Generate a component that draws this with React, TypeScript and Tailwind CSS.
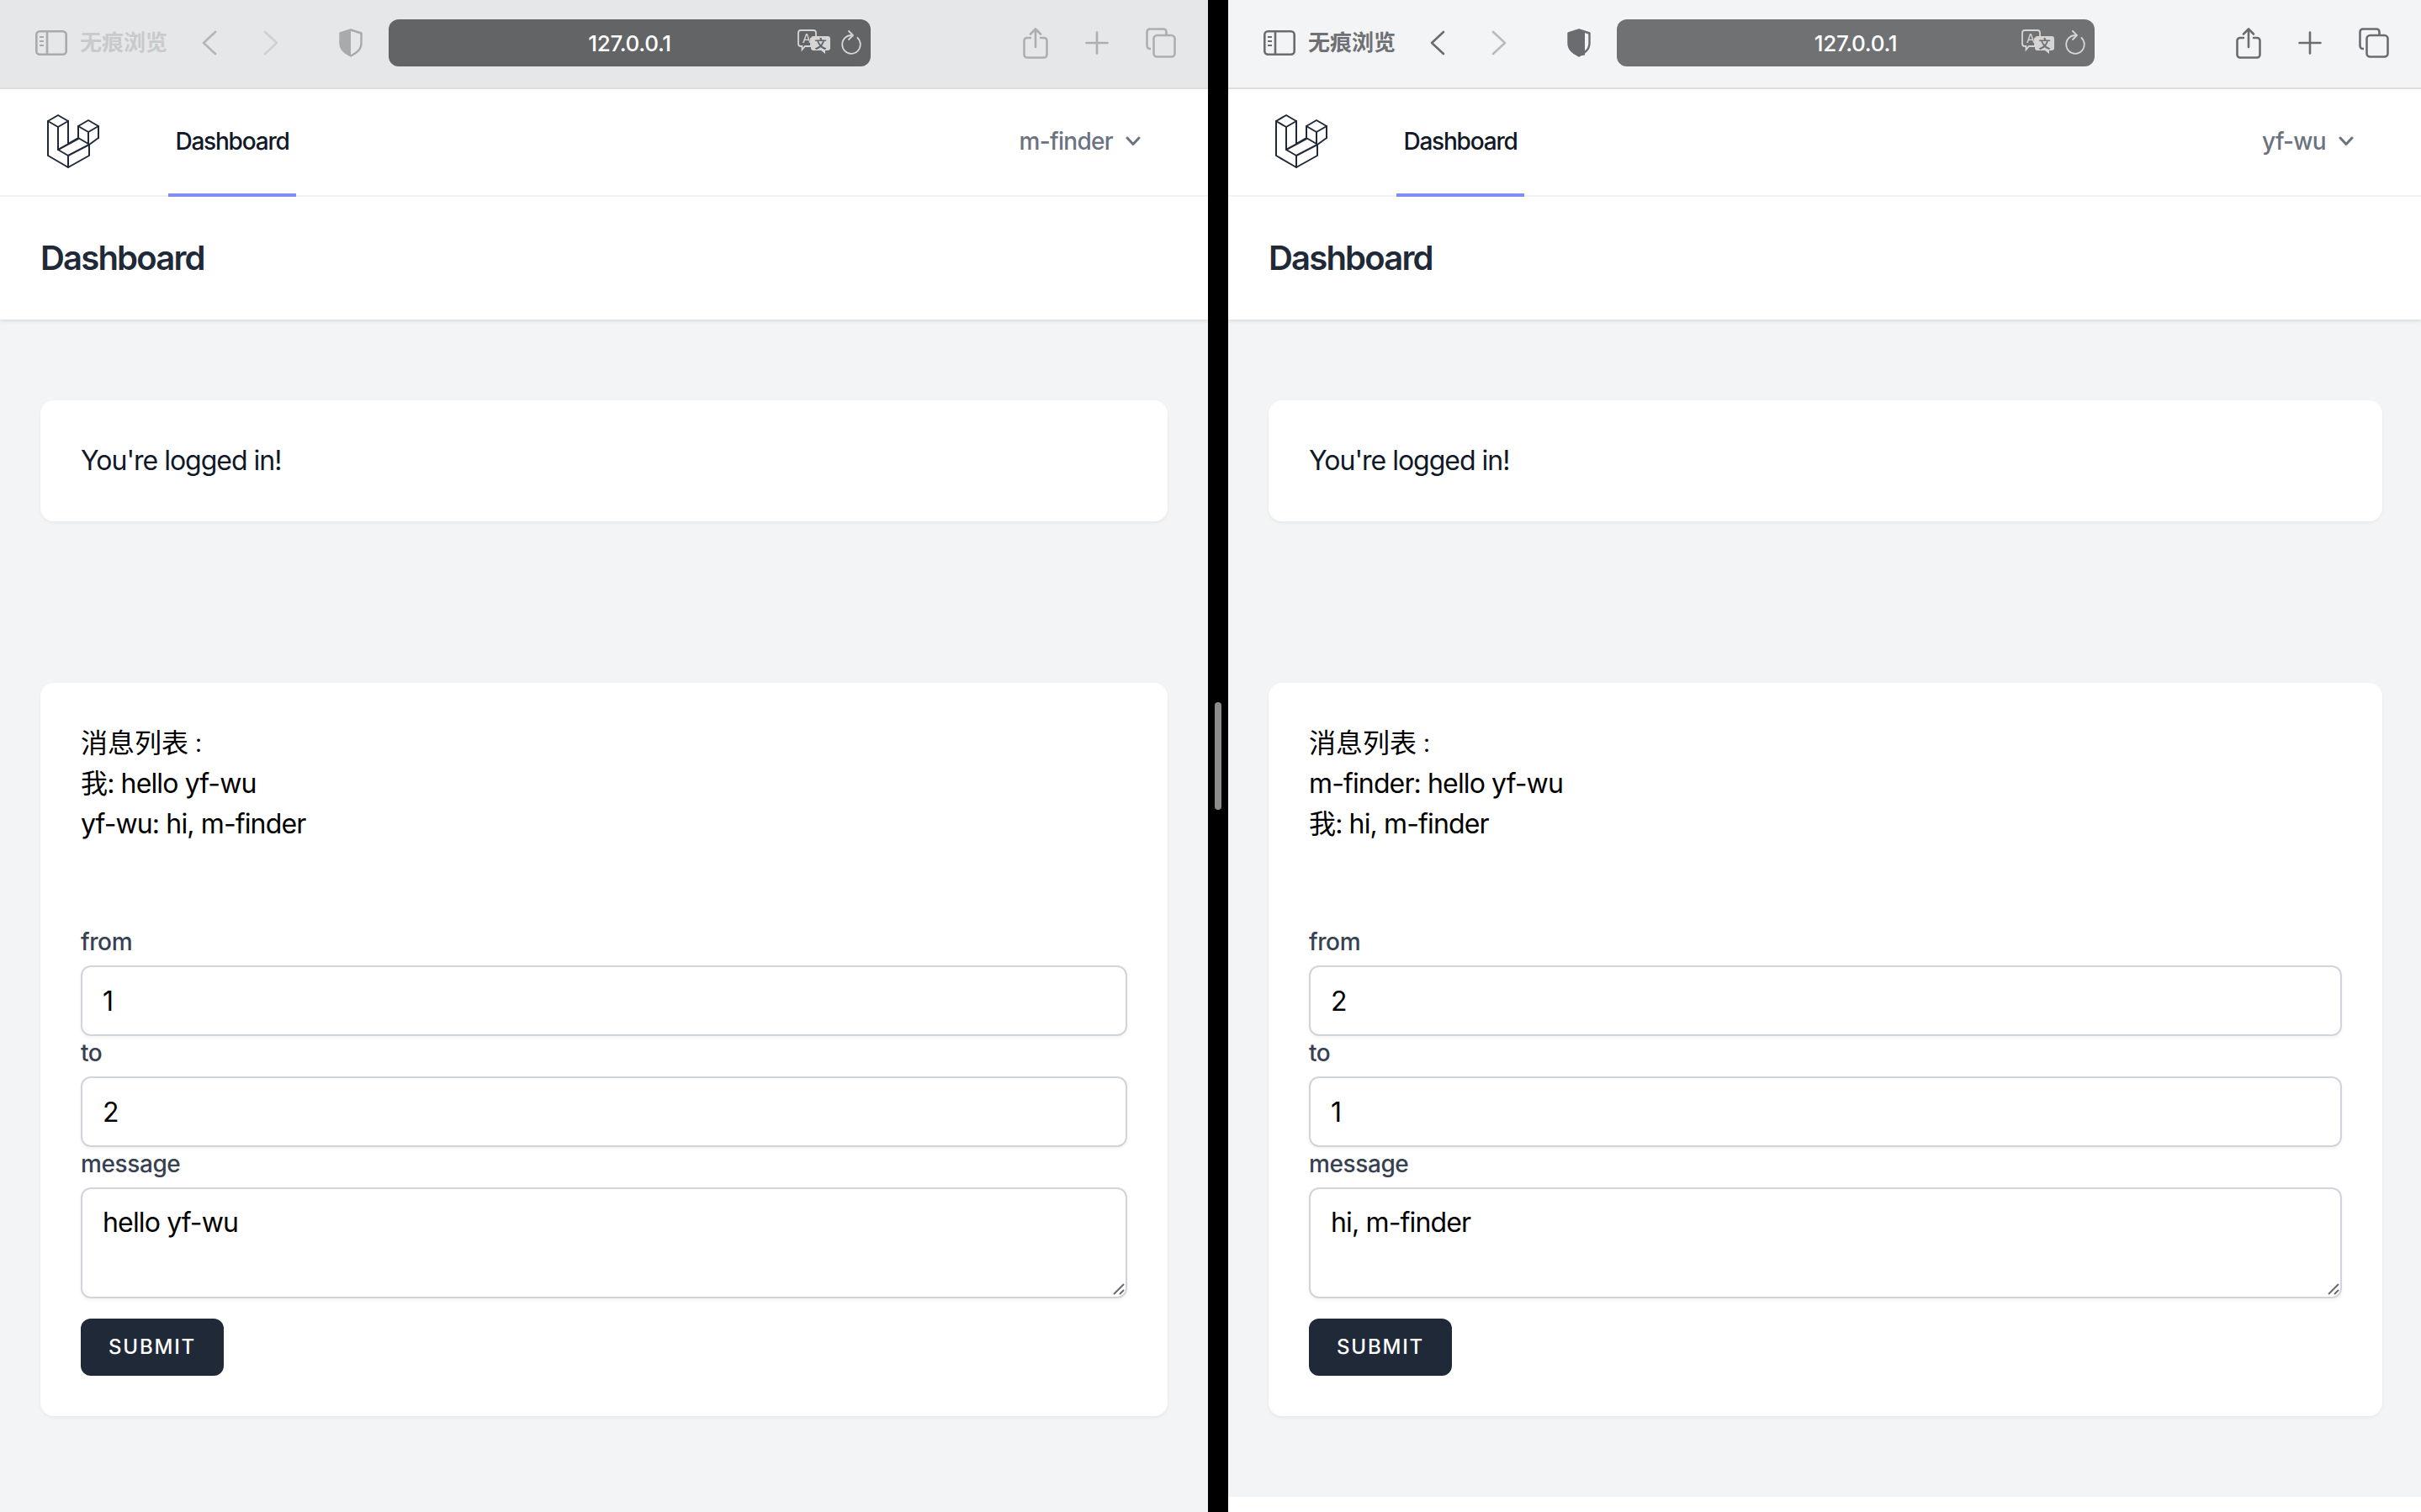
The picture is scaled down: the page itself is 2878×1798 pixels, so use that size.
const fontInter = 'font-[Inter,"Noto_Sans_CJK_SC",sans-serif]'

function SidebarIcon() {
  return (
    <svg width="38" height="30" viewBox="0 0 38 30" fill="none" stroke="currentColor" strokeWidth="2.6">
      <rect x="1.3" y="1.3" width="35.4" height="27.4" rx="4" />
      <path d="M14 1.5V28.5" />
      <path d="M5 8H10M5 13H10M5 18H10" strokeWidth="2" />
    </svg>
  )
}

function ChevronLeft() {
  return (
    <svg width="18" height="30" viewBox="0 0 18 30" fill="none" stroke="currentColor" strokeWidth="2.6" strokeLinecap="round" strokeLinejoin="round">
      <path d="M16 2L2 15L16 28" />
    </svg>
  )
}

function ChevronRight() {
  return (
    <svg width="18" height="30" viewBox="0 0 18 30" fill="none" stroke="currentColor" strokeWidth="2.6" strokeLinecap="round" strokeLinejoin="round">
      <path d="M2 2L16 15L2 28" />
    </svg>
  )
}

function ShieldIcon({ fillTo }: { fillTo: number }) {
  return (
    <svg width="28" height="34" viewBox="0 0 28 34" fill="none">
      <path d={`M14 1.5L${fillTo} 3.2V31.4L14 32.5C7 29 1.5 25 1.5 17V5.5Z`} fill="currentColor" />
      <path d="M14 1.5L26.5 5.5V17C26.5 25 21 29 14 32.5C7 29 1.5 25 1.5 17V5.5Z" stroke="currentColor" strokeWidth="2.4" strokeLinejoin="round" />
    </svg>
  )
}

function TranslateIcon({ inner }: { inner: string }) {
  return (
    <svg width="40" height="30" viewBox="0 0 40 30" fill="none">
      <path d="M4 1H19C21 1 22 2 22 4V11H16V20H9L5.5 24V20H4C2 20 1 19 1 17V4C1 2 2 1 4 1Z" stroke="#d4d5d7" strokeWidth="1.8" />
      <text x="11" y="16" textAnchor="middle" fontSize="15" fill="#d4d5d7" fontFamily="Inter, sans-serif">A</text>
      <path d="M19 8H36C38 8 39 9 39 11V22C39 24 38 25 36 25H33V29L28 25H19C17 25 16 24 16 22V11C16 9 17 8 19 8Z" fill="#d4d5d7" />
      <text x="27.5" y="22" textAnchor="middle" fontSize="14" fontWeight="700" fill={inner} fontFamily="'Noto Sans CJK SC', sans-serif">文</text>
    </svg>
  )
}

function ReloadIcon() {
  return (
    <svg width="24" height="29" viewBox="0 0 24 29" fill="none" stroke="#d4d5d7" strokeWidth="1.8" strokeLinecap="round" strokeLinejoin="round">
      <path d="M12 6C6 6 1.2 10.8 1.2 16.8C1.2 23 6 27.8 12 27.8C18 27.8 22.8 23 22.8 16.8C22.8 13.6 21.5 11 19.4 8.8" />
      <path d="M9 1L14 6L9 11" />
    </svg>
  )
}

function ShareIcon() {
  return (
    <svg width="30" height="37" viewBox="0 0 30 37" fill="none" stroke="currentColor" strokeWidth="2.6" strokeLinecap="round" strokeLinejoin="round">
      <path d="M9 12H5C3 12 1.5 13.5 1.5 15.5V32C1.5 34 3 35.5 5 35.5H25C27 35.5 28.5 34 28.5 32V15.5C28.5 13.5 27 12 25 12H21" />
      <path d="M15 2V23M9 7.5L15 1.5L21 7.5" />
    </svg>
  )
}

function PlusIcon() {
  return (
    <svg width="28" height="28" viewBox="0 0 28 28" fill="none" stroke="currentColor" strokeWidth="2.6" strokeLinecap="round">
      <path d="M14 1.5V26.5M1.5 14H26.5" />
    </svg>
  )
}

function TabsIcon() {
  return (
    <svg width="36" height="36" viewBox="0 0 36 36" fill="none" stroke="currentColor" strokeWidth="2.6" strokeLinejoin="round">
      <path d="M6 25H5C3 25 1.5 23.5 1.5 21.5V5C1.5 3 3 1.5 5 1.5H21C23 1.5 24.5 3 24.5 5V9" />
      <rect x="9.5" y="9" width="25" height="25.5" rx="4" />
    </svg>
  )
}

function LaravelLogo() {
  return (
    <svg width="63" height="64" viewBox="0 0 63 64" fill="none" stroke="#1f2937" strokeWidth="2" strokeLinejoin="round" strokeLinecap="round">
      <path d="M1 8L13 1L25 8L13 15Z" />
      <path d="M1 8V49L25 63L50 49V36" />
      <path d="M25 8V35L37 28" />
      <path d="M13 15V42L25 49V63" />
      <path d="M13 42L37 29" />
      <path d="M25 49L50 36L61 28" />
      <path d="M37 14L49 7L61 14L49 21Z" />
      <path d="M37 14V28L49 35" />
      <path d="M49 21V35" />
      <path d="M61 14V28" />
    </svg>
  )
}

function Field({ label, value }: { label: string; value: string }) {
  return (
    <div>
      <label className="block text-[28px] leading-[40px] font-medium tracking-[-0.4px] text-[#374151]">{label}</label>
      <input
        readOnly
        value={value}
        className="block mt-2 w-full h-[84px] px-6 text-[32px] text-black bg-white border-2 border-[#d1d5db] rounded-xl shadow-[0_2px_4px_rgba(0,0,0,0.05)] outline-none"
      />
    </div>
  )
}

type PaneProps = {
  active: boolean
  user: string
  barWidth: string
  lines: string[]
  from: string
  to: string
  message: string
}

function Pane({ active, user, barWidth, lines, from, to, message }: PaneProps) {
  return (
    <div className={`flex flex-col bg-white ${active ? 'flex-1' : 'w-[1436px]'}`}>
      {/* Панель браузера */}
      <div className={`flex items-center h-[106px] shrink-0 border-b-2 border-[#dcdddf] pb-[2px] ${active ? 'bg-[#f3f4f6]' : 'bg-[#e6e7e9]'}`}>
        <div className={`ml-[42px] ${active ? 'text-[#6b6c70]' : 'text-[#a9aaac]'}`}>
          <SidebarIcon />
        </div>
        <span className={`ml-[15px] text-[26px] leading-[30px] font-bold ${active ? 'text-[#6f7074]' : 'text-[#c9cacc]'}`}>无痕浏览</span>
        <div className={`ml-[41px] ${active ? 'text-[#6b6c70]' : 'text-[#b4b5b7]'}`}>
          <ChevronLeft />
        </div>
        <div className={`ml-[55px] ${active ? 'text-[#b9babc]' : 'text-[#cfd0d2]'}`}>
          <ChevronRight />
        </div>
        <div className={`ml-[72px] ${active ? 'text-[#6b6c70]' : 'text-[#a9aaac]'}`}>
          <ShieldIcon fillTo={active ? 21 : 14} />
        </div>
        <div className={`relative flex items-center justify-center ml-[31px] h-[56px] rounded-xl ${barWidth} ${active ? 'bg-[#707173]' : 'bg-[#636466]'}`}>
          <span className="pt-[1px] text-[26px] font-medium text-white tracking-[-0.3px]">127.0.0.1</span>
          <div className="absolute right-[11px] top-[12px] flex items-center gap-[12px]">
            <TranslateIcon inner={active ? '#707173' : '#636466'} />
            <ReloadIcon />
          </div>
        </div>
        <div className={`flex items-center ml-auto mr-[38px] ${active ? 'text-[#6b6c70]' : 'text-[#adaeb0]'}`}>
          <ShareIcon />
          <div className="ml-[44px]">
            <PlusIcon />
          </div>
          <div className="ml-[44px]">
            <TabsIcon />
          </div>
        </div>
      </div>

      {/* Навигация */}
      <nav className="flex items-stretch justify-between h-[128px] shrink-0 border-b-2 border-[#f3f4f6] bg-white">
        <div className="flex items-stretch">
          <div className="ml-[56px] mt-[30px]">
            <LaravelLogo />
          </div>
          <a className="flex items-center justify-center h-[128px] w-[152px] ml-[81px] border-b-4 border-[#818cf8] text-[28px] font-medium tracking-[-1.2px] text-[#111827]">Dashboard</a>
        </div>
        <div className="flex items-center gap-[15px] pr-[80px] pb-[2px] text-[28px] font-medium tracking-[-0.7px] text-[#6b7280]">
          {user}
          <svg width="18" height="12" viewBox="0 0 18 12" fill="none" stroke="currentColor" strokeWidth="3" strokeLinecap="round" strokeLinejoin="round">
            <path d="M2 2L9 9.5L16 2" />
          </svg>
        </div>
      </nav>

      <header className="relative bg-white px-12 py-12 shrink-0 shadow-[0_2px_4px_rgba(0,0,0,0.1)]">
        <h2 className="text-[40px] leading-[50px] font-semibold text-[#1f2937] tracking-[-1.8px]">Dashboard</h2>
      </header>

      <main className={`bg-[#f3f4f6] pl-12 py-24 ${active ? 'pr-[46px]' : 'pr-12 flex-1'}`}>
        <div className="bg-white rounded-2xl p-12 h-[144px] shadow-[0_2px_4px_rgba(0,0,0,0.05)] text-[32px] leading-[48px] tracking-[-1px] text-[#111827]">
          You're logged in!
        </div>

        <div className="mt-[192px] bg-white rounded-2xl px-12 pt-[48px] pb-12 shadow-[0_2px_4px_rgba(0,0,0,0.05)]">
          <div className="text-[32px] leading-[48px] text-black">
            <div className="h-[48px]">
              消息列表<span className="text-[24px] font-['Noto_Sans_CJK_TC']">：</span>
            </div>
            {lines.map((line) => (
              <div key={line} className="tracking-[-0.87px]">{line}</div>
            ))}
          </div>

          <form className="mt-[96px]">
            <Field label="from" value={from} />
            <Field label="to" value={to} />
            <label className="block text-[28px] leading-[40px] font-medium tracking-[-0.4px] text-[#374151]">message</label>
            <div className="relative mt-2">
              <textarea
                readOnly
                value={message}
                className="block w-full h-[132px] px-6 py-4 text-[32px] leading-[48px] tracking-[-0.85px] text-black bg-white border-2 border-[#d1d5db] rounded-xl shadow-[0_2px_4px_rgba(0,0,0,0.05)] outline-none resize-none"
              />
              <svg className="absolute right-[3px] bottom-[4px]" width="14" height="14" viewBox="0 0 14 14" fill="none" stroke="#6b6b6b" strokeWidth="2">
                <path d="M1 13L13 1M8 13L13 8" />
              </svg>
            </div>
            <button
              type="button"
              className="block mt-6 h-[68px] w-[170px] rounded-xl bg-[#1f2937] text-[24px] font-medium uppercase tracking-[1.8px] text-white"
            >
              Submit
            </button>
          </form>
        </div>
      </main>
    </div>
  )
}

export default function App() {
  return (
    <div className={`flex h-[1798px] w-[2878px] overflow-hidden bg-white ${fontInter}`}>
      <Pane
        active={false}
        user="m-finder"
        barWidth="w-[573px]"
        lines={['我: hello yf-wu', 'yf-wu: hi, m-finder']}
        from="1"
        to="2"
        message="hello yf-wu"
      />
      <div className="flex w-[24px] shrink-0 items-center justify-center bg-black">
        <div className="h-[128px] w-[8px] rounded-full bg-[#8c8c8c]" />
      </div>
      <Pane
        active
        user="yf-wu"
        barWidth="w-[568px]"
        lines={['m-finder: hello yf-wu', '我: hi, m-finder']}
        from="2"
        to="1"
        message="hi, m-finder"
      />
    </div>
  )
}
